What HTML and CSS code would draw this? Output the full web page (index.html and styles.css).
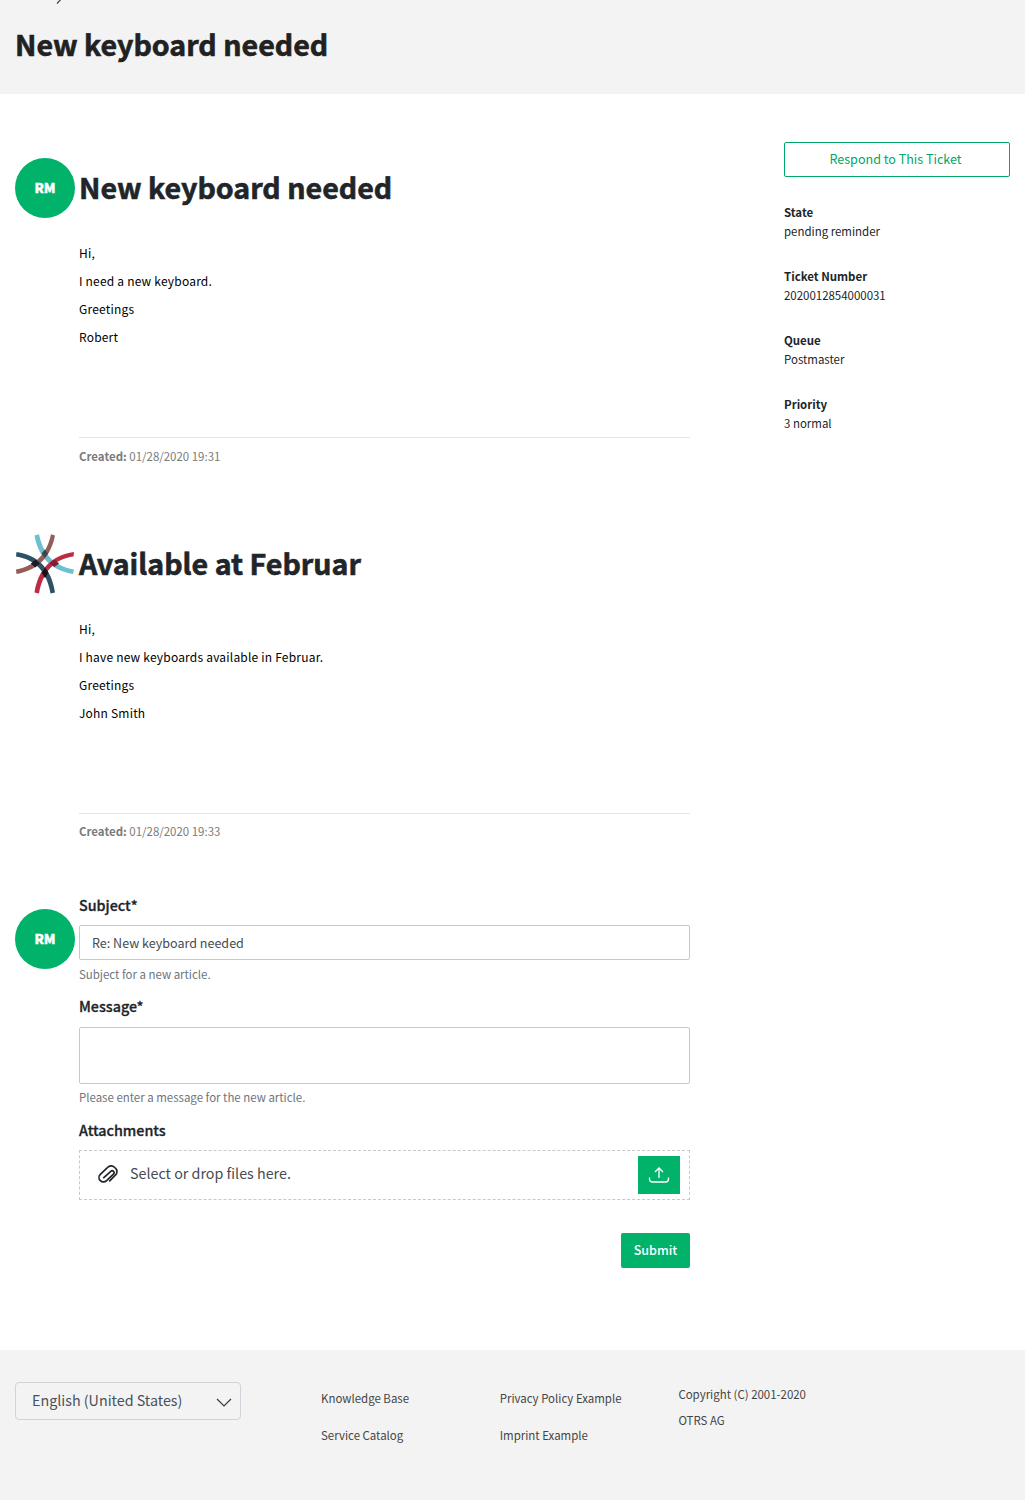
FILE: index.html
```html
<!DOCTYPE html>
<html lang="en">
<head>
<meta charset="utf-8">
<title>New keyboard needed</title>
<link rel="stylesheet" href="styles.css">
</head>
<body>
<header class="hero">
  <svg class="crumb-arrow" viewBox="0 0 8 14"><path d="M1 0.500l6 6.500-6 6.500"/></svg>
  <h1 class="title">New keyboard needed</h1>
</header>
<main class="main">
  <div class="thread">
    <article class="article">
      <div class="avatar">RM</div>
      <div class="content">
        <h2 class="title">New keyboard needed</h2>
        <div class="message">
          <p>Hi,</p>
          <p>I need a new keyboard.</p>
          <p>Greetings</p>
          <p>Robert</p>
        </div>
        <div class="created"><b>Created:</b> 01/28/2020 19:31</div>
      </div>
    </article>
    <article class="article">
      <svg class="logo" viewBox="0 0 60 60">
        <path fill="#6cc0d0" d="M19.500 1.500L24 .3C28 19 38 32 59 35.500L58 40C35 36 23 22 19.500 1.500z"/>
        <path fill="#965c58" d="M36 .3L40 1.500C36 22 24 36 1.500 40L1 35.500C21 32 32 19 36 .3z"/>
        <path fill="#bd2a42" d="M59 18L58.500 22.500C39 25 28 38 24 59.500L19.500 58.500C23 36 36 21 59 18z"/>
        <path fill="#2d5266" d="M1.500 18C24 21 37 36 40 58.500L35.500 59.500C32 38 21 26 1 22.500z"/>
        <path fill="#364750" d="M29.800 15.500l3.200 4-3.200 4.300-3.200-4.300z"/>
        <path fill="#1d1a20" d="M15.800 29.400l4.700-3.900 4.300 4.100-4.600 3.800z"/>
        <path fill="#7d2036" d="M34.800 29.600l4.400-4.100 4.900 3.900-4.700 3.700z"/>
        <path fill="#1b0f17" d="M30 33.500l3.300 5-3.300 5.700-3.300-5.700z"/>
      </svg>
      <div class="content">
        <h2 class="title">Available at Februar</h2>
        <div class="message">
          <p>Hi,</p>
          <p>I have new keyboards available in Februar.</p>
          <p>Greetings</p>
          <p>John Smith</p>
        </div>
        <div class="created late"><b>Created:</b> 01/28/2020 19:33</div>
      </div>
    </article>
    <form class="article reply">
      <div class="avatar">RM</div>
      <div class="content">
        <label class="label">Subject*</label>
        <div class="input">Re: New keyboard needed</div>
        <div class="hint">Subject for a new article.</div>
        <label class="label tall">Message*</label>
        <div class="input textarea"></div>
        <div class="hint last">Please enter a message for the new article.</div>
        <label class="label">Attachments</label>
        <div class="drop">
          <svg class="clip" viewBox="0 0 20 20"><path d="M5.500 13l6.700-6a1.800 1.800 0 0 1 2.500 2.600l-6.500 6.200a4.200 4.200 0 0 1-6-6l6.500-6.200a5.400 5.400 0 0 1 8.800 5.900l-6.300 6.500"/></svg>
          <span class="drop-text">Select or drop files here.</span>
          <span class="upload"><svg viewBox="0 0 22 18"><path d="M11 12V2M7 6l4-4 4 4M1.500 11.500v1.500a3 3 0 0 0 3 3h13a3 3 0 0 0 3-3v-1.500"/></svg></span>
        </div>
        <div class="submit">Submit</div>
      </div>
    </form>
  </div>
  <aside class="side">
    <div class="respond">Respond to This Ticket</div>
    <dl class="facts">
      <div><dt>State</dt><dd>pending reminder</dd></div>
      <div><dt>Ticket Number</dt><dd>2020012854000031</dd></div>
      <div><dt>Queue</dt><dd>Postmaster</dd></div>
      <div><dt>Priority</dt><dd>3 normal</dd></div>
    </dl>
  </aside>
</main>
<footer class="footer">
  <div class="lang"><span>English (United States)</span><svg viewBox="0 0 16 10"><path d="M1 1l7 7 7-7"/></svg></div>
  <div class="links"><span>Knowledge Base</span><span>Service Catalog</span></div>
  <div class="links"><span>Privacy Policy Example</span><span>Imprint Example</span></div>
  <div class="copy"><span>Copyright (C) 2001-2020</span><span>OTRS AG</span></div>
</footer>
</body>
</html>
```
FILE: styles.css
```css
* { box-sizing: border-box; }
body {
  margin: 0;
  height: 1500px;
  overflow: hidden;
  display: flex;
  flex-direction: column;
  background: #fff;
  color: #212529;
  font: 11.460px/16px "Noto Sans CJK SC", sans-serif;
}
h1, h2, p, dl, dd { margin: 0; }
.hero { height: 94px; padding: 0 15px; background: #f3f3f3; overflow: hidden; }
.crumb-arrow { display: block; width: 8px; height: 14px; margin: -10px 0 0 41px; fill: none; stroke: #444; stroke-width: 1.200; }
.title { font-size: 28.600px; line-height: 40px; font-weight: 700; white-space: nowrap; -webkit-text-stroke: .6px currentColor; }
.hero .title { margin-top: 20px; color: #212121; }
.main { display: flex; justify-content: space-between; height: 1256px; padding: 48px 15px 0; }
.thread { width: 675px; padding-top: 16px; }
.article { display: flex; gap: 4px; height: 376px; }
.article.reply { height: auto; }
.avatar {
  flex: none;
  width: 60px;
  height: 60px;
  border-radius: 50%;
  background: #00b26a;
  color: #fff;
  font-size: 13.400px;
  font-weight: 900;
  line-height: 59px;
  text-align: center;
  -webkit-text-stroke: .4px #fff;
}
.logo { flex: none; width: 60px; height: 60px; }
.content { flex: 1; }
.article .title { margin-top: 9px; }
.message { height: 230px; padding-top: 32px; color: #000; font-size: 12px; line-height: 28px; letter-spacing: .2px; }
.created { border-top: 1px solid #e4e4e4; padding-top: 10px; color: #7b7b7b; }
.created.late { padding-top: 9px; }
.reply .avatar { margin-top: -1px; }
.reply .content { margin-top: -16px; }
.label { display: block; height: 31px; font-size: 14.300px; line-height: 22px; font-weight: 500; -webkit-text-stroke: .3px currentColor; }
.label.tall { height: 32px; }
.input { height: 35px; border: 1px solid #c8c8c8; border-radius: 2px; padding: 0 12px; font-size: 12.550px; line-height: 34px; color: #444b52; }
.textarea { height: 57px; }
.hint { height: 35px; padding-top: 6px; color: #6c757d; }
.hint.last { padding-top: 5px; }
.drop { display: flex; align-items: center; height: 50px; padding: 0 9px 0 18px; border: 1px dashed #c8c8c8; }
.clip { width: 21px; height: 21px; margin-top: -2px; fill: none; stroke: #212529; stroke-width: 1.600; stroke-linecap: round; }
.drop-text { flex: 1; margin: -4px 0 0 11px; font-size: 14.300px; color: #444b52; }
.upload { display: flex; align-items: center; justify-content: center; width: 42px; height: 38px; background: #00b26a; }
.upload svg { width: 22px; height: 18px; fill: none; stroke: #fff; stroke-width: 1.300; }
.submit { width: 69px; height: 35px; margin: 33px 0 0 auto; border-radius: 2px; background: #00b26a; color: #fff; text-align: center; font-size: 12.500px; font-weight: 500; line-height: 34px; }
.side { width: 226px; }
.respond { height: 35px; border: 1px solid #00a766; border-radius: 2px; color: #00a766; font-size: 12.550px; line-height: 32px; text-align: center; padding-right: 3px; }
.facts { display: grid; gap: 26px; margin-top: 26px; line-height: 19px; }
.facts dt { font-weight: 700; }
.footer { display: flex; height: 150px; padding: 32px 15px; background: #f3f3f3; color: #444; }
.lang { display: flex; align-items: center; justify-content: space-between; width: 226px; height: 38px; padding: 0 8px 2px 16px; border: 1px solid #ced4da; border-radius: 4px; font-size: 14.300px; color: #495057; }
.lang svg { width: 16px; height: 10px; margin-top: 5px; fill: none; stroke: #343a40; stroke-width: 1.200; }
.links { display: grid; align-content: start; width: 178.700px; padding-top: 8px; row-gap: 21px; }
.lang + .links { margin-left: 80px; }
.copy { display: grid; align-content: start; row-gap: 10px; padding-top: 4px; }
```
